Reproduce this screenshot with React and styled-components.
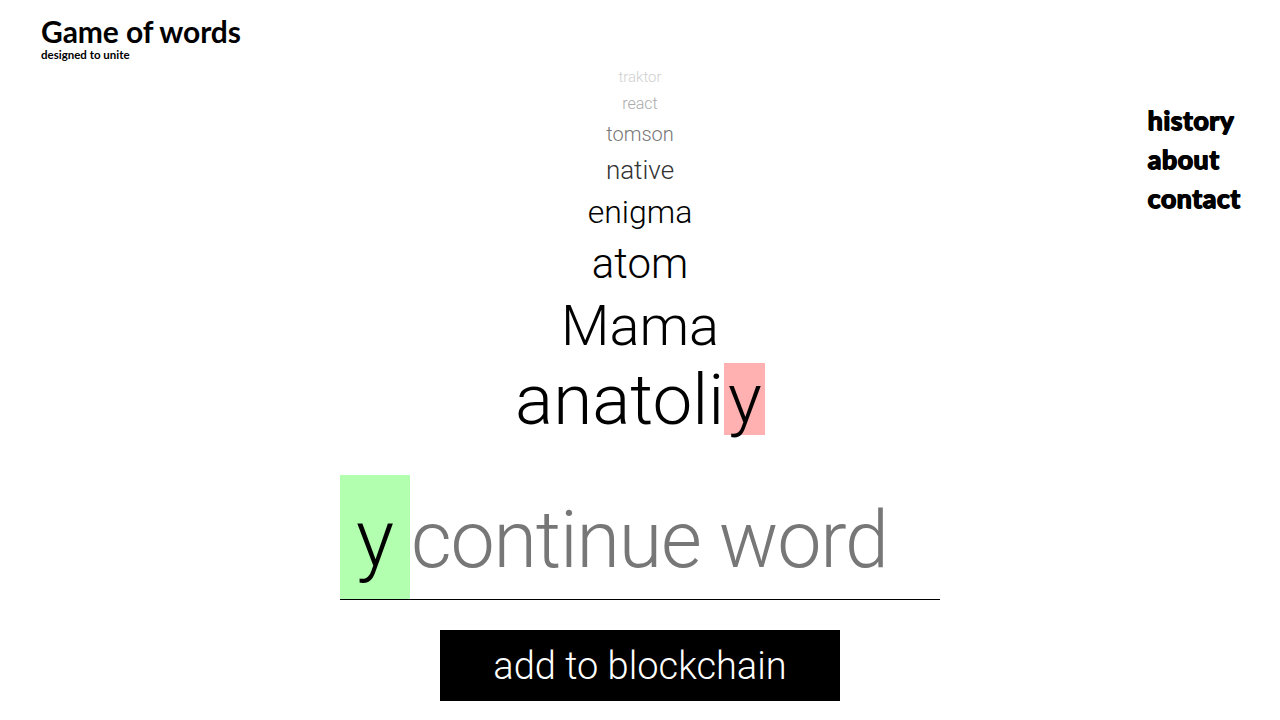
import React from "react";
import styled, { createGlobalStyle } from "styled-components";

const Global = createGlobalStyle`
  html, body { margin: 0; padding: 0; background: #fff; }
  body { font-family: "Roboto", "Liberation Sans", sans-serif; color: #000; }
  * { box-sizing: border-box; }
`;

const Page = styled.div`
  display: grid;
  grid-template-columns: 1fr 600px 1fr;
  width: 1280px;
  height: 720px;
  overflow: hidden;
`;

const Brand = styled.header`
  padding: 13px 0 0 41px;
  font-family: "Lato", sans-serif;
  font-weight: 700;
`;

const Title = styled.h1`
  margin: 0;
  font-size: 30px;
  line-height: 36px;
  letter-spacing: -0.1px;
`;

const Tagline = styled.div`
  font-size: 11.5px;
  line-height: 12px;
`;

const Nav = styled.nav`
  justify-self: end;
  padding: 100px 40px 0 0;
  display: flex;
  flex-direction: column;
  font-family: "Lato", sans-serif;
  font-weight: 900;
`;

const NavLink = styled.a`
  font-size: 27px;
  line-height: 39px;
  color: #000;
  text-decoration: none;
  letter-spacing: 0.3px;
  text-shadow: 1px 1px 0 #000, 1px 0 0 #000;
`;

const Center = styled.main`
  display: flex;
  flex-direction: column;
  align-items: center;
  padding-top: 64px;
`;

const Word = styled.div`
  font-weight: 300;
  font-size: ${(p) => p.$size}px;
  line-height: ${(p) => p.$lh}px;
  height: ${(p) => p.$lh}px;
  color: ${(p) => p.$color};
  white-space: nowrap;
`;

const LastLetter = styled.span`
  display: inline-block;
  background: #ffb0b0;
  height: 72px;
  line-height: 72px;
  vertical-align: top;
  margin-top: 5px;
  padding: 0 3px 0 4px;
`;

const InputRow = styled.div`
  margin-top: 33px;
  width: 600px;
  display: flex;
  align-items: stretch;
  border-bottom: 1px solid #000;
  height: 125px;
`;

const StartLetter = styled.div`
  width: 70px;
  background: #b3ffb0;
  font-weight: 300;
  font-size: 80px;
  line-height: 128px;
  text-align: center;
  color: #000;
`;

const WordInput = styled.input`
  flex: 1;
  min-width: 0;
  border: none;
  outline: none;
  background: transparent;
  padding: 6px 0 0 1px;
  font-family: "Roboto", sans-serif;
  font-weight: 300;
  font-size: 79px;
  letter-spacing: -1.2px;
  color: #000;
  &::placeholder { color: #777; opacity: 1; }
`;

const SubmitButton = styled.button`
  margin-top: 30px;
  width: 400px;
  height: 71px;
  border: none;
  background: #000;
  color: #fff;
  font-family: "Roboto", sans-serif;
  font-weight: 300;
  font-size: 38px;
  padding: 0;
  cursor: pointer;
`;

const words = [
  { text: "traktor", size: 15, lh: 26, color: "#cfcfcf" },
  { text: "react", size: 16, lh: 28, color: "#aaaaaa" },
  { text: "tomson", size: 20, lh: 32, color: "#777777" },
  { text: "native", size: 26, lh: 40, color: "#333333" },
  { text: "enigma", size: 32, lh: 44, color: "#000000" },
  { text: "atom", size: 42, lh: 60, color: "#000000" },
  { text: "Mama", size: 56, lh: 64, color: "#000000" },
];

export default function App() {
  return (
    <>
      <Global />
      <Page>
        <Brand>
          <Title>Game of words</Title>
          <Tagline>designed to unite</Tagline>
        </Brand>
        <Center>
          {words.map((w) => (
            <Word key={w.text} $size={w.size} $lh={w.lh} $color={w.color}>
              {w.text}
            </Word>
          ))}
          <Word $size={71} $lh={84} $color="#000">
            anatoli<LastLetter>y</LastLetter>
          </Word>
          <InputRow>
            <StartLetter>y</StartLetter>
            <WordInput placeholder="continue word" />
          </InputRow>
          <SubmitButton>add to blockchain</SubmitButton>
        </Center>
        <Nav>
          <NavLink href="#">history</NavLink>
          <NavLink href="#">about</NavLink>
          <NavLink href="#">contact</NavLink>
        </Nav>
      </Page>
    </>
  );
}
